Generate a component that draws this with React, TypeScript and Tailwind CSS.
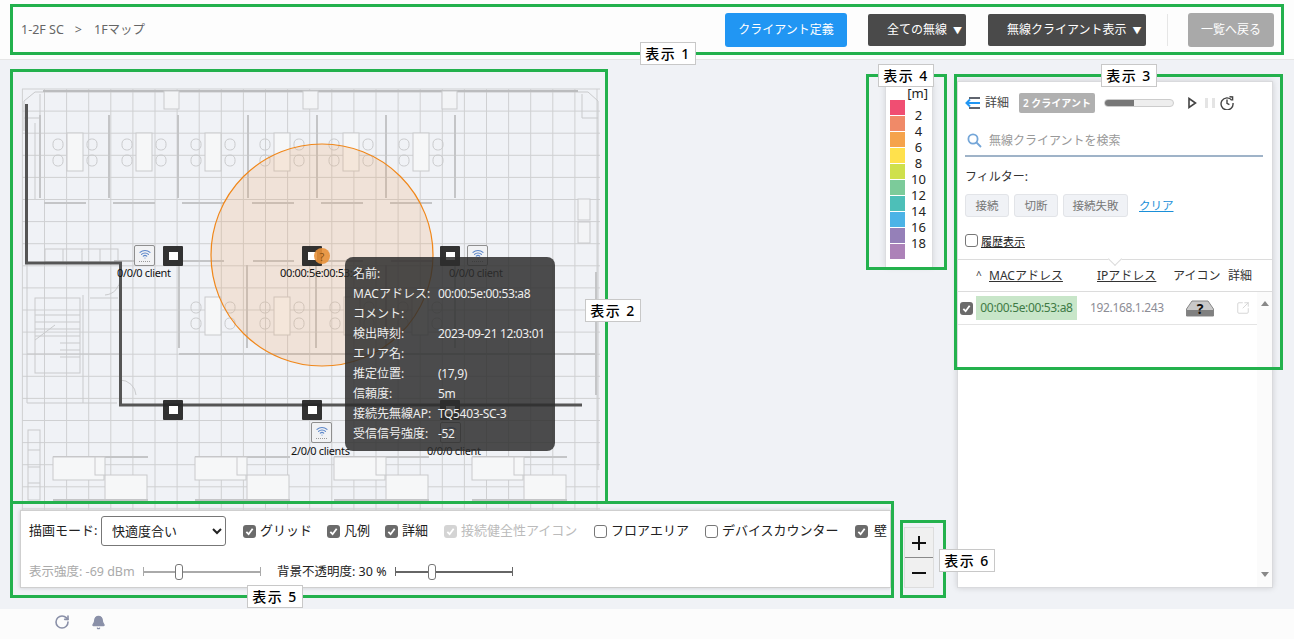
import { Bell, RotateCw, SquareArrowOutUpRight, Wifi } from 'lucide-react'

const gridX = Array.from({ length: 27 }, (_, i) => 22.4 + i * 22.1)
const gridY = Array.from({ length: 20 }, (_, i) => 89 + i * 22.1)
const topTables = [75, 144, 213, 282, 351, 421]
const lowTables = [213, 282, 352, 420]
const partitions = [40, 109, 178, 248, 317, 386, 455]
const desks = [53, 195, 334, 472]
const legend = ['#f04e72', '#f08a68', '#f5a34c', '#ffe14c', '#cfe04c', '#7ccb9a', '#4dbfb8', '#4cb3e6', '#9580b8', '#ac82b8']
const legendLabels = [2, 4, 6, 8, 10, 12, 14, 16, 18]
const tooltipRows = [
  ['名前:', ''],
  ['MACアドレス:', '00:00:5e:00:53:a8'],
  ['コメント:', ''],
  ['検出時刻:', '2023-09-21 12:03:01'],
  ['エリア名:', ''],
  ['推定位置:', '(17,9)'],
  ['信頼度:', '5m'],
  ['接続先無線AP:', 'TQ5403-SC-3'],
  ['受信信号強度:', '-52'],
]

function FloorPlan() {
  return (
    <svg className="block h-[430px] w-[588px]" viewBox="20 80 588 430" fill="none">
      <g stroke="#cfd0d2" strokeWidth="1">
        {gridX.map((x) => (
          <line key={x} x1={x} y1="89" x2={x} y2="510" />
        ))}
        {gridY.map((y) => (
          <line key={y} x1="22" y1={y} x2="600" y2={y} />
        ))}
      </g>
      <g stroke="#c9cacc" strokeWidth="1">
        <path d="M24 131V101L35 92H588L598 101V470" />
        <line x1="43" y1="91" x2="578" y2="91" stroke="#bbbcbe" strokeWidth="2" />
        <path d="M24 118H40V94M598 118H582V94" />
        {[164, 303, 442].map((x) => (
          <rect key={x} x={x} y="91" width="15" height="18" fill="#f3f4f6" />
        ))}
        <rect x="578" y="199" width="12" height="21" fill="#f3f4f6" />
        <rect x="578" y="222" width="12" height="21" fill="#f3f4f6" />
        <rect x="45" y="249" width="73" height="13" />
        <path d="M63 249V262M82 249V262M100 249V262" />
        <path d="M35 123V199" />
        <path d="M27 263V403H83M83 295V403H117M90 298H118" />
        <rect x="35" y="298" width="45" height="75" />
        <path d="M35 315H80M35 322H80M35 329H80M35 336H80M60 343H80M60 350H80M60 357H80M35 340L55 325" />
        <path d="M120 278A16 16 0 0 1 105 295M120 380A16 16 0 0 1 136 395" />
        <rect x="28" y="430" width="12" height="70" />
        <path d="M28 450H40M28 467H40M28 483H40" />
      </g>
      <g stroke="#c4c5c7" strokeWidth="2">
        {partitions.map((x) => (
          <line key={x} x1={x} y1="115" x2={x} y2="198" />
        ))}
        {partitions.slice(0, 6).map((x) => (
          <line key={x} x1={x + 4} y1="203" x2={x + 46} y2="203" />
        ))}
        {partitions.slice(1, 6).map((x) => (
          <line key={x} x1={x + 5} y1="261" x2={x + 46} y2="261" />
        ))}
        {[179, 247, 316, 386, 455].map((x) => (
          <line key={x} x1={x} y1="265" x2={x} y2="348" />
        ))}
        <line x1="27" y1="354" x2="120" y2="354" strokeWidth="1" />
        <line x1="179" y1="354" x2="596" y2="354" />
        <line x1="596" y1="272" x2="596" y2="395" />
      </g>
      <g stroke="#c9cacc" strokeWidth="1" fill="#f6f7f8">
        {topTables.map((x) => (
          <g key={x}>
            <rect x={x - 8} y="133" width="16" height="38" />
            {[x - 17, x + 17].map((c) => (
              <g key={c}>
                <rect x={c - 5} y="139" width="10" height="11" rx="4.5" fill="none" />
                <rect x={c - 5} y="155" width="10" height="11" rx="4.5" fill="none" />
              </g>
            ))}
          </g>
        ))}
        {lowTables.map((x) => (
          <g key={x}>
            <rect x={x - 8} y="297" width="16" height="38" />
            {[x - 17, x + 17].map((c) => (
              <g key={c}>
                <rect x={c - 5} y="302" width="10" height="11" rx="4.5" fill="none" />
                <rect x={c - 5} y="318" width="10" height="11" rx="4.5" fill="none" />
              </g>
            ))}
          </g>
        ))}
        {desks.map((x) => (
          <g key={x}>
            <line x1={x} y1="457" x2={x + 95} y2="457" stroke="#c4c5c7" strokeWidth="2" />
            <rect x={x} y="457" width="51" height="23" />
            <rect x={x + 52} y="475" width="42" height="26" />
            <rect x={x + 42} y="457" width="10" height="18" />
            <line x1={x} y1="500" x2={x + 95} y2="500" stroke="#c4c5c7" strokeWidth="2" />
          </g>
        ))}
      </g>
      <path d="M26.5 104V263H120.5V405H582" stroke="#555" strokeWidth="3" />
      <circle cx="322" cy="255" r="111" fill="#f2a566" fillOpacity="0.2" stroke="#f0871a" strokeWidth="1.2" />
    </svg>
  )
}

function ApNode({ className }: { className: string }) {
  return (
    <div className={`absolute flex h-5 w-5 items-center justify-center rounded-[1px] bg-[#272727]/95 ${className}`}>
      <div className="h-2 w-[9px] bg-white" />
    </div>
  )
}

function WifiCard({ className }: { className: string }) {
  return (
    <div className={`absolute flex h-[21px] w-[21px] flex-col items-center rounded-[2px] border border-[#8f8f8f] bg-[#f1f2f4] pt-[2px] ${className}`}>
      <Wifi size={12} color="#5b86c9" strokeWidth={2.2} />
      <div className="mt-[1px] h-px w-[11px] border-t border-dotted border-[#999]" />
    </div>
  )
}

function MapLabel({ className, children }: { className: string; children: string }) {
  return <div className={`absolute whitespace-nowrap text-[11px] leading-[14px] tracking-[-0.35px] text-[#111] ${className}`}>{children}</div>
}

function FakeCheck({ checked, disabled, className = '' }: { checked?: boolean; disabled?: boolean; className?: string }) {
  if (!checked) return <span className={`block h-[13px] w-[13px] shrink-0 rounded-[3px] border border-[#777] bg-white ${className}`} />
  return (
    <span className={`flex h-[13px] w-[13px] shrink-0 items-center justify-center rounded-[3px] ${disabled ? 'bg-[#d4d4d4]' : 'bg-[#6b6b6b]'} ${className}`}>
      <svg width="9" height="9" viewBox="0 0 10 10" fill="none">
        <path d="M1.5 5.5L4 8L8.5 2" stroke="white" strokeWidth="2" />
      </svg>
    </span>
  )
}

function Option({ label, checked, disabled, className }: { label: string; checked?: boolean; disabled?: boolean; className: string }) {
  return (
    <label className={`flex items-center text-[13px] ${disabled ? 'text-[#bbb]' : 'text-[#222]'} ${className}`}>
      <FakeCheck checked={checked} disabled={disabled} className="mr-1" />
      {label}
    </label>
  )
}

function Slider({ width, thumb, muted }: { width: string; thumb: string; muted?: boolean }) {
  const color = muted ? 'bg-[#aaa]' : 'bg-[#666]'
  return (
    <div className={`relative h-4 ${width}`}>
      <div className={`absolute left-0 right-0 top-[7px] h-[2px] ${color}`} />
      <div className={`absolute left-0 top-[3px] h-[9px] w-px ${color}`} />
      <div className={`absolute right-0 top-[3px] h-[9px] w-px ${color}`} />
      <div className={`absolute top-0 h-4 w-2 rounded-[3px] border border-[#777] bg-white ${thumb}`} />
    </div>
  )
}

function Toolbar() {
  return (
    <div className="h-[78px] w-[871px] border border-[#cfcfcf] bg-white shadow-[0_0_4px_rgba(0,0,0,0.15)]">
      <div className="flex h-[40px] items-center pl-2">
        <span className="w-[72px] whitespace-nowrap text-[13px] text-[#222]">描画モード:</span>
        <select defaultValue="快適度合い" className="h-[30px] w-[125px] rounded-[3px] border border-[#777] bg-white pl-[6px] text-[13px] text-[#222]">
          <option>快適度合い</option>
        </select>
        <Option label="グリッド" checked className="ml-[17px] w-[84px]" />
        <Option label="凡例" checked className="w-[58px]" />
        <Option label="詳細" checked className="w-[59px]" />
        <Option label="接続健全性アイコン" checked disabled className="w-[150px] whitespace-nowrap" />
        <Option label="フロアエリア" className="w-[111px] whitespace-nowrap" />
        <Option label="デバイスカウンター" className="w-[150px] whitespace-nowrap" />
        <Option label="壁" checked className="gap-[2px]" />
      </div>
      <div className="flex h-[42px] items-center pl-2 text-[12.5px]">
        <span className="w-[114px] whitespace-nowrap text-[#aaa]">表示強度: -69 dBm</span>
        <Slider width="w-[118px]" thumb="left-[32px]" muted />
        <span className="ml-[16px] w-[118px] whitespace-nowrap text-[#222]">背景不透明度: 30 %</span>
        <Slider width="w-[118px]" thumb="left-[33px]" />
      </div>
    </div>
  )
}

function Legend() {
  return (
    <div className="ml-[277px] mt-[2px] h-[185px] w-[48px] border-x border-[#dcdde0] bg-white shadow-[0_0_6px_rgba(0,0,0,0.12)]">
      <div className="mr-[4px] h-[18px] pt-[3px] text-right text-[13px] leading-[16px] text-[#222]">[m]</div>
      <div className="flex">
        <div className="ml-[4px] flex w-[15px] flex-col gap-px">
          {legend.map((c) => (
            <div key={c} className="h-[15px]" style={{ backgroundColor: c }} />
          ))}
        </div>
        <div className="w-[27px] pt-[7px] text-center">
          {legendLabels.map((n) => (
            <div key={n} className="h-4 text-[13px] leading-4 text-[#222]">
              {n}
            </div>
          ))}
        </div>
      </div>
    </div>
  )
}

function Tooltip() {
  return (
    <div className="absolute left-[325px] top-[177px] z-10 h-[194px] w-[210px] rounded-lg bg-[#2e2e2e]/85 px-2 pt-[7px] text-[12px] leading-5 text-[#eee]">
      {tooltipRows.map(([k, v]) => (
        <div key={k} className="flex h-[20px] whitespace-nowrap">
          <span className="w-[85px] shrink-0">{k}</span>
          <span className="tracking-[-0.35px]">{v}</span>
        </div>
      ))}
    </div>
  )
}

function MapCanvas() {
  return (
    <div className="relative h-[430px] w-[588px]">
      <FloorPlan />
      <ApNode className="left-[143px] top-[166px]" />
      <ApNode className="left-[282px] top-[166px]" />
      <ApNode className="left-[420px] top-[166px]" />
      <ApNode className="left-[143px] top-[320px]" />
      <ApNode className="left-[282px] top-[320px]" />
      <ApNode className="left-[420px] top-[320px]" />
      <WifiCard className="left-[114px] top-[165px]" />
      <WifiCard className="left-[447px] top-[165px]" />
      <WifiCard className="left-[291px] top-[342px]" />
      <WifiCard className="left-[420px] top-[342px]" />
      <div className="absolute left-[294px] top-[168px] flex h-4 w-4 items-center justify-center rounded-full bg-[#e8913a]/90 text-[11px] leading-none text-[#8a5214]">?</div>
      <MapLabel className="left-[97px] top-[186px]">0/0/0 client</MapLabel>
      <MapLabel className="left-[260px] top-[186px]">00:00:5e:00:53:a8</MapLabel>
      <MapLabel className="left-[429px] top-[186px]">0/0/0 client</MapLabel>
      <MapLabel className="left-[271px] top-[364px]">2/0/0 clients</MapLabel>
      <MapLabel className="left-[407px] top-[364px]">0/0/0 client</MapLabel>
      <Tooltip />
    </div>
  )
}

function BackListIcon() {
  return (
    <svg width="15" height="12" viewBox="0 0 15 12" fill="none">
      <path d="M4 1H15M4 11H15" stroke="#60656f" strokeWidth="2" />
      <path d="M15 6H1.5M5 2.5L1.5 6L5 9.5" stroke="#2196f3" strokeWidth="2" />
    </svg>
  )
}

function HistoryIcon() {
  return (
    <svg width="14" height="14" viewBox="0 0 14 14" fill="none" stroke="#444" strokeWidth="1.4">
      <path d="M11.8 4.2A6 6 0 1 0 13 7" />
      <path d="M7 3.5V7.3L9.4 8.6" />
      <path d="M9.5 0.8L12.6 1V4.4" />
    </svg>
  )
}

function ChipButton({ children, className }: { children: string; className: string }) {
  return <div className={`flex h-[23px] items-center justify-center rounded-[3px] border border-[#e2e4e8] bg-[#f0f2f6] text-[11.5px] text-[#777] ${className}`}>{children}</div>
}

function BoxIcon() {
  return (
    <svg className="block" width="28" height="17" viewBox="0 0 28 17">
      <path d="M6 1H22L27.5 9V16H0.5V9Z" fill="#c9c9c9" stroke="#888" />
      <path d="M0.5 10H27.5V16H0.5Z" fill="#808080" />
      <text x="14" y="14" textAnchor="middle" fontSize="14" fontWeight="700" fill="#111">?</text>
    </svg>
  )
}

function SidePanel() {
  return (
    <div className="ml-[23px] mt-px flex h-[507px] w-[316px] flex-col border border-[#d9dadd] bg-white shadow-[0_0_6px_rgba(0,0,0,0.15)]">
      <div className="px-[7px] pt-[11px]">
        <div className="flex h-5 items-center">
          <BackListIcon />
          <span className="ml-[5px] text-[12px] text-[#444]">詳細</span>
          <span className="ml-[10px] flex h-5 w-[76px] items-center justify-center rounded-[2px] bg-[#b0b0b0] text-[10px] font-semibold text-white">2 クライアント</span>
          <div className="ml-[9px] h-2 w-[70px] overflow-hidden rounded-full border border-[#ccc] bg-[#eee]">
            <div className="h-full w-[29px] bg-[#777]" />
          </div>
          <svg className="ml-[13px]" width="10" height="12" viewBox="0 0 10 12" fill="none">
            <path d="M2 1.5L8.5 6L2 10.5Z" stroke="#444" strokeWidth="1.6" />
          </svg>
          <div className="ml-2 flex w-[10px] justify-between">
            <div className="h-[10px] w-[3px] bg-[#e4e4e4]" />
            <div className="h-[10px] w-[3px] bg-[#e4e4e4]" />
          </div>
          <div className="ml-[5px]">
            <HistoryIcon />
          </div>
        </div>
        <div className="mt-[17px] flex h-[27px] w-[298px] items-center border-b-2 border-[#9fb3c8] pb-[4px]">
          <svg className="ml-[2px]" width="15" height="15" viewBox="0 0 15 15" fill="none" stroke="#74a6d8" strokeWidth="1.8">
            <circle cx="6" cy="6" r="4.6" />
            <path d="M9.5 9.5L14 14" />
          </svg>
          <span className="ml-[7px] text-[12px] text-[#999]">無線クライアントを検索</span>
        </div>
        <div className="mt-[12px] h-4 text-[12px] leading-4 text-[#333]">フィルター:</div>
        <div className="mt-[9px] flex items-center">
          <ChipButton className="w-[44px]">接続</ChipButton>
          <ChipButton className="ml-[5px] w-[44px]">切断</ChipButton>
          <ChipButton className="ml-[5px] w-[65px]">接続失敗</ChipButton>
          <span className="ml-[11px] text-[11.5px] text-[#1a8fd8] underline">クリア</span>
        </div>
        <div className="mt-[17px] flex h-4 items-center">
          <FakeCheck className="mb-[4px]" />
          <span className="ml-[3px] text-[11px] text-[#222] underline">履歴表示</span>
        </div>
      </div>
      <div className="relative mt-[9px] flex h-[33px] items-center border-y border-[#dcdcdc] pl-[18px] text-[12px] text-[#333]">
        <div className="absolute left-[152px] top-[-6px] h-[10px] w-[10px] rotate-45 border-b border-r border-[#dcdcdc] bg-white" />
        <span className="w-[13px] text-[10px]">^</span>
        <span className="w-[108px] underline">MACアドレス</span>
        <span className="w-[76px] underline">IPアドレス</span>
        <span className="w-[55px]">アイコン</span>
        <span>詳細</span>
      </div>
      <div className="flex flex-1">
        <div className="flex-1">
          <div className="flex h-[33px] items-center border-b border-[#e4e4e4] pl-[2px]">
            <FakeCheck checked />
            <span className="ml-[3px] flex h-6 w-[101px] items-center justify-center bg-[#c8e6c9] text-[12px] tracking-[-0.35px] text-[#3e7a45]">00:00:5e:00:53:a8</span>
            <span className="ml-[13px] w-[72px] whitespace-nowrap text-[12px] tracking-[-0.35px] text-[#8d8d95]">192.168.1.243</span>
            <span className="ml-[24px] w-[28px]">
              <BoxIcon />
            </span>
            <SquareArrowOutUpRight className="ml-[22px]" size={14} color="#d4d4d4" strokeWidth={1.6} />
          </div>
        </div>
        <div className="flex w-[15px] flex-col items-center justify-between bg-[#fbfbfb] pb-[10px] pt-[9px]">
          <div className="h-0 w-0 border-x-[4px] border-b-[5px] border-x-transparent border-b-[#888]" />
          <div className="h-0 w-0 border-x-[4px] border-t-[5px] border-x-transparent border-t-[#888]" />
        </div>
      </div>
    </div>
  )
}

function GreenBox({ className }: { className: string }) {
  return <div className={`pointer-events-none absolute z-20 border-[3px] border-[#23b14d] ${className}`} />
}

function Tag({ className, children }: { className: string; children: string }) {
  return (
    <div className={`absolute z-30 flex h-[23px] w-[56px] items-center justify-center border border-[#c8c8c8] bg-white text-[14px] font-medium tracking-[1.5px] text-black ${className}`}>
      {children}
    </div>
  )
}

export default function App() {
  return (
    <div className="relative flex h-[639px] w-[1294px] flex-col overflow-hidden bg-[#f0f2f6] font-['Noto_Sans','Noto_Sans_CJK_JP',sans-serif]">
      <header className="flex h-[60px] shrink-0 items-center border-b border-[#e6e6e6] bg-[#fdfdfd] pl-[21px] pr-[20px]">
        <span className="pt-px text-[12.5px] text-[#666]">1-2F SC</span>
        <span className="ml-[11px] pt-px text-[12.5px] text-[#666]">&gt;</span>
        <span className="ml-[12px] pt-px text-[12.5px] text-[#666]">1Fマップ</span>
        <button className="ml-auto h-[34px] w-[122px] rounded-[3px] bg-[#2196f3] pt-px text-[12px] text-white">クライアント定義</button>
        <button className="ml-[21px] h-[32px] w-[98px] rounded-[2px] bg-[#4a4a4a] pl-[19px] pt-px text-left text-[12px] text-white">
          全ての無線<span className="ml-[6px] text-[9px]">▼</span>
        </button>
        <button className="ml-[22px] h-[32px] w-[158px] rounded-[2px] bg-[#4a4a4a] pl-[19px] pt-px text-left text-[12px] text-white">
          無線クライアント表示<span className="ml-[6px] text-[9px]">▼</span>
        </button>
        <div className="ml-[21px] h-[32px] w-px bg-[#e6e6e6]" />
        <button className="ml-[20px] h-[34px] w-[86px] rounded-[3px] bg-[#a9a9a9] pt-px text-[12px] text-white">一覧へ戻る</button>
      </header>

      <main className="flex h-[549px] shrink-0 pt-5">
        <div className="ml-5 w-[914px]">
          <div className="flex h-[430px]">
            <MapCanvas />
            <Legend />
          </div>
          <div className="flex items-end">
            <Toolbar />
            <div className="ml-[13px] flex h-[61px] w-[30px] flex-col border border-[#dddddd] bg-[#f0f0f0] text-[#111]">
              <div className="flex h-[30px] items-center justify-center border-b border-[#8a8a8a]">
                <svg width="16" height="16" viewBox="0 0 16 16" stroke="#111" strokeWidth="2">
                  <path d="M8 1V15M1 8H15" />
                </svg>
              </div>
              <div className="flex flex-1 items-center justify-center">
                <svg width="16" height="4" viewBox="0 0 16 4" stroke="#111" strokeWidth="2">
                  <path d="M1 2H15" />
                </svg>
              </div>
            </div>
          </div>
        </div>
        <SidePanel />
      </main>

      <footer className="flex flex-1 items-center bg-[#fcfcfc] pb-[4px] pl-[54px]">
        <RotateCw size={16} color="#8a90a8" strokeWidth={2.4} />
        <Bell className="ml-[21px]" size={15} color="#8a90a8" fill="#8a90a8" />
      </footer>

      <GreenBox className="left-[10px] top-[4px] h-[51px] w-[1274px]" />
      <GreenBox className="left-[10px] top-[69px] h-[435px] w-[598px]" />
      <GreenBox className="left-[954px] top-[74px] h-[296px] w-[329px]" />
      <GreenBox className="left-[866px] top-[74px] h-[196px] w-[81px]" />
      <GreenBox className="left-[10px] top-[501px] h-[97px] w-[884px]" />
      <GreenBox className="left-[900px] top-[520px] h-[78px] w-[46px]" />
      <Tag className="left-[640px] top-[42px]">表示 1</Tag>
      <Tag className="left-[585px] top-[299px]">表示 2</Tag>
      <Tag className="left-[1101px] top-[64px]">表示 3</Tag>
      <Tag className="left-[878px] top-[64px]">表示 4</Tag>
      <Tag className="left-[247px] top-[585px]">表示 5</Tag>
      <Tag className="left-[939px] top-[549px]">表示 6</Tag>
    </div>
  )
}
